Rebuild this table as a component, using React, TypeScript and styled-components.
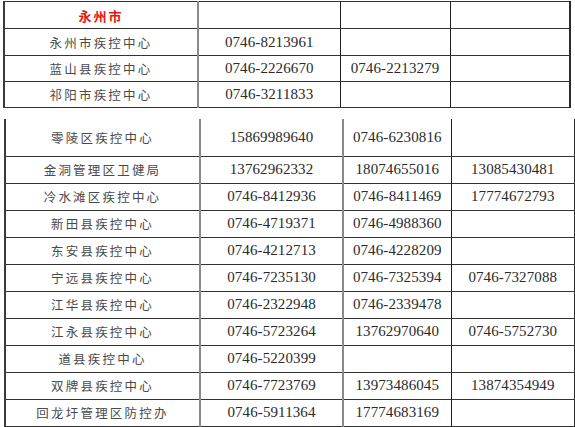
import React from 'react'
import styled, { createGlobalStyle } from 'styled-components'

const GlobalStyle = createGlobalStyle`
  html, body {
    margin: 0;
    padding: 0;
    background: #ffffff;
    overflow: hidden;
  }
`;

type Row = { name: string; phones: string[]; tall?: boolean };

const cityRows: Row[] = [
  { name: '永州市疾控中心', phones: ['0746-8213961'] },
  { name: '蓝山县疾控中心', phones: ['0746-2226670', '0746-2213279'] },
  { name: '祁阳市疾控中心', phones: ['0746-3211833'] },
];

const countyRows: Row[] = [
  { name: '零陵区疾控中心', phones: ['15869989640', '0746-6230816'], tall: true },
  { name: '金洞管理区卫健局', phones: ['13762962332', '18074655016', '13085430481'] },
  { name: '冷水滩区疾控中心', phones: ['0746-8412936', '0746-8411469', '17774672793'] },
  { name: '新田县疾控中心', phones: ['0746-4719371', '0746-4988360'] },
  { name: '东安县疾控中心', phones: ['0746-4212713', '0746-4228209'] },
  { name: '宁远县疾控中心', phones: ['0746-7235130', '0746-7325394', '0746-7327088'] },
  { name: '江华县疾控中心', phones: ['0746-2322948', '0746-2339478'] },
  { name: '江永县疾控中心', phones: ['0746-5723264', '13762970640', '0746-5752730'] },
  { name: '道县疾控中心', phones: ['0746-5220399'] },
  { name: '双牌县疾控中心', phones: ['0746-7723769', '13973486045', '13874354949'] },
  { name: '回龙圩管理区防控办', phones: ['0746-5911364', '17774683169'] },
  { name: '', phones: [] },
];

export default function App() {
  return (
    <>
      <GlobalStyle />
      <Page>
        <Sheet $left={3} $width={566}>
          <colgroup>
            <col style={{ width: 194 }} />
            <col style={{ width: 142 }} />
            <col style={{ width: 110 }} />
            <col style={{ width: 120 }} />
          </colgroup>
          <tbody>
            <SheetRow $height={27}>
              <NameCell><CityTitle>永州市</CityTitle></NameCell>
              <PhoneCell $dark />
              <PhoneCell $dark />
              <PhoneCell $dark />
            </SheetRow>
            {cityRows.map((row, i) => (
              <SheetRow key={row.name} $height={i === 0 ? 27 : 26}>
                <NameCell>{row.name}</NameCell>
                {[0, 1, 2].map((k) => (
                  <PhoneCell key={k} $dark>{row.phones[k] ?? ''}</PhoneCell>
                ))}
              </SheetRow>
            ))}
          </tbody>
        </Sheet>

        <Sheet $left={4} $width={570} $open>
          <colgroup>
            <col style={{ width: 195 }} />
            <col style={{ width: 143 }} />
            <col style={{ width: 108 }} />
            <col style={{ width: 124 }} />
          </colgroup>
          <tbody>
            {countyRows.map((row, i) => (
              <SheetRow key={i} $height={row.tall ? 37 : 27}>
                <NameCell>{row.name}</NameCell>
                <PhoneCell>{row.phones[0] ?? ''}</PhoneCell>
                <PhoneCell $dark>{row.phones[1] ?? ''}</PhoneCell>
                <PhoneCell $dark>{row.phones[2] ?? ''}</PhoneCell>
              </SheetRow>
            ))}
          </tbody>
        </Sheet>
      </Page>
    </>
  )
}

// styled components
const Page = styled.div`
  display: flex;
  flex-direction: column;
  gap: 11px;
  width: 575px;
  height: 427px;
  padding-top: 1px;
  box-sizing: border-box;
  overflow: hidden;
`;

const Sheet = styled.table<{ $left: number; $width: number; $open?: boolean }>`
  margin-left: ${({ $left }) => $left}px;
  width: ${({ $width }) => $width}px;
  border-collapse: collapse;
  table-layout: fixed;
  border: 1px solid #2b2b2b;
  border-left: 2px solid #3a3a3a;
  border-right: 2px solid #2b2b2b;
  ${({ $open }) => $open && `
    border-top: none;
    & tr:first-child > td { border-top: none; }
  `}
`;

const SheetRow = styled.tr<{ $height: number }>`
  height: ${({ $height }) => $height}px;
  & > td {
    border-top: 1px solid #333333;
    border-bottom: 1px solid #333333;
  }
`;

const NameCell = styled.td`
  padding: 0;
  text-align: center;
  vertical-align: middle;
  border-right: 2px solid #8a8a8a;
  font-family: "Noto Sans CJK SC", "Noto Sans", sans-serif;
  font-size: 12.5px;
  letter-spacing: 2.2px;
  color: #4a4a4a;
  white-space: nowrap;
  overflow: hidden;
`;

const PhoneCell = styled.td<{ $dark?: boolean }>`
  padding: 0;
  text-align: center;
  vertical-align: middle;
  border-right: ${({ $dark }) => ($dark ? '1px solid #1f1f1f' : '2px solid #8a8a8a')};
  font-family: "Liberation Serif", "Times New Roman", serif;
  font-size: 15px;
  letter-spacing: 0.1px;
  color: #2a2a2a;
  white-space: nowrap;
  overflow: hidden;
`;

const CityTitle = styled.span`
  font-family: "Noto Sans CJK SC", sans-serif;
  font-weight: 700;
  font-size: 13px;
  letter-spacing: 2px;
  color: #ee1111;
`;
